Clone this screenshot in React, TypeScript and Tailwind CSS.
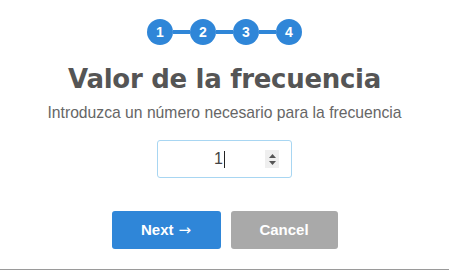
import React from "react";

export default function App() {
  const steps = [1, 2, 3, 4];
  return (
    <div className="w-[449px] h-[270px] bg-white border-b border-[#9a9a9a] flex flex-col items-center">
      <div className="flex items-center mt-[19px]">
        {steps.map((n, i) => (
          <React.Fragment key={n}>
            {i > 0 && <div className="w-[17px] h-[4px] bg-[#2f86d8]" />}
            <div className="w-[26px] h-[26px] rounded-full bg-[#2f86d8] text-white flex items-center justify-center text-[14px] font-bold font-['Liberation_Sans',sans-serif]">
              {n}
            </div>
          </React.Fragment>
        ))}
      </div>
      <h1 className="mt-[18px] text-[26px] leading-[32px] font-bold text-[#555555] font-['DejaVu_Sans',sans-serif] tracking-[-0.3px]">
        Valor de la frecuencia
      </h1>
      <p className="mt-[9px] text-[15.7px] leading-[18px] text-[#666666] font-['Liberation_Sans',sans-serif]">
        Introduzca un número necesario para la frecuencia
      </p>
      <div className="mt-[18px] w-[135px] h-[38px] border border-[#a8d6f2] rounded-[3px] flex items-center pl-[14px] pr-[12px] font-['Liberation_Sans',sans-serif]">
        <div className="flex-1 flex justify-end items-center pr-[40px]">
          <span className="text-[16px] text-[#444]">1</span>
          <span className="w-[1px] h-[17px] bg-[#222] ml-[1px]" />
        </div>
        <div className="w-[14px] h-[18px] bg-[#efefef] flex flex-col items-center justify-center gap-[3px]">
          <svg width="7" height="4" viewBox="0 0 7 4"><path d="M0 4 L3.5 0 L7 4 Z" fill="#555" /></svg>
          <svg width="7" height="4" viewBox="0 0 7 4"><path d="M0 0 L3.5 4 L7 0 Z" fill="#555" /></svg>
        </div>
      </div>
      <div className="mt-[33px] flex gap-[10px] font-['Liberation_Sans',sans-serif]">
        <button className="w-[109px] h-[38px] rounded-[3px] bg-[#2f86d8] text-white text-[15px] font-bold flex items-center justify-center gap-[5px]">
          <span>Next</span>
          <span className="font-['DejaVu_Sans',sans-serif] font-normal text-[15px]">→</span>
        </button>
        <button className="w-[107px] h-[38px] rounded-[3px] bg-[#a9a9a9] text-white text-[15px] font-bold">
          Cancel
        </button>
      </div>
    </div>
  );
}
